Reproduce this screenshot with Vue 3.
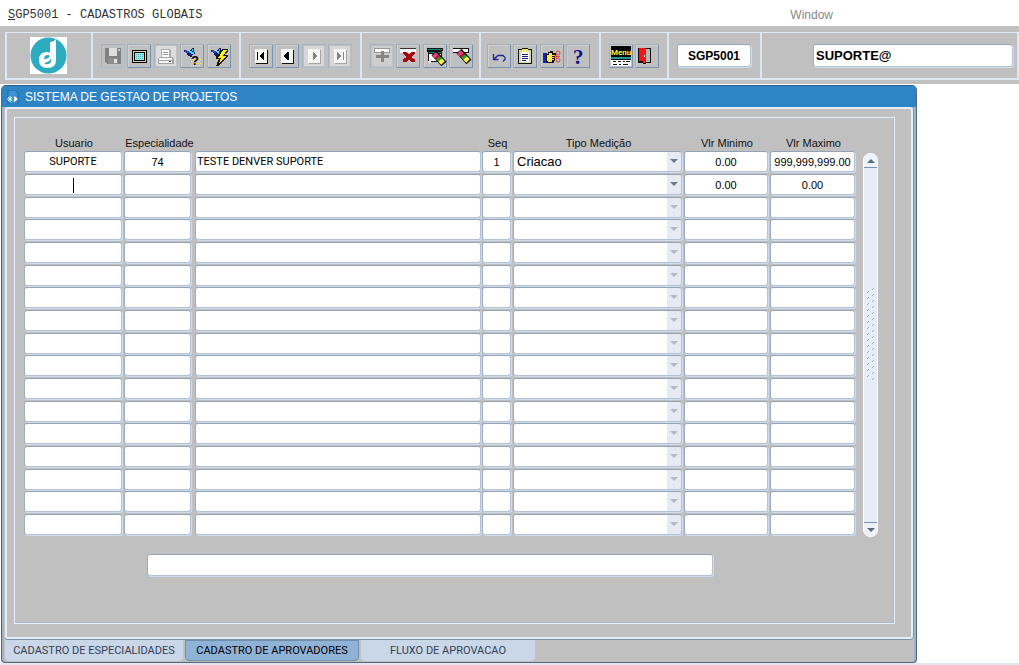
<script setup>
import { ref } from 'vue'

const rows = ref(
  Array.from({ length: 17 }, (_, i) => ({
    user: '', code: '', desc: '', seq: '', kind: '',
    min: i === 1 ? '0.00' : '', max: i === 1 ? '0.00' : '',
    active: i < 2,
  })),
)
Object.assign(rows.value[0], {
  user: 'SUPORTE', code: '74', desc: 'TESTE DENVER SUPORTE', seq: '1',
  kind: 'Criacao', min: '0.00', max: '999,999,999.00',
})

const program = ref('SGP5001')
const login = ref('SUPORTE@')
const message = ref('')
const tabs = ['CADASTRO DE ESPECIALIDADES', 'CADASTRO DE APROVADORES', 'FLUXO DE APROVACAO']
const current = ref(1)

const groups = [
  { name: 'file', tools: ['save', 'screen', 'print', 'query', 'execute'] },
  { name: 'nav', tools: ['first', 'previous', 'next', 'last'] },
  { name: 'record', tools: ['insert', 'remove', 'clear-block', 'clear-record'] },
  { name: 'edit', tools: ['undo', 'clipboard', 'keys', 'help'] },
  { name: 'menu', tools: ['menu', 'exit'] },
]
const disabled = ['save', 'print', 'next', 'last', 'insert']
</script>

<template>
  <div class="app">
    <header class="menubar">
      <span class="caption"><u>S</u>GP5001 - CADASTROS GLOBAIS</span>
      <button class="window-menu" type="button">Window</button>
    </header>

    <div class="toolbar">
      <div class="strip">
        <div class="segment logo">
          <svg width="37" height="37" viewBox="0 0 37 37" aria-label="Denver">
            <rect width="37" height="37" fill="#fff" />
            <circle cx="18.5" cy="18.500" r="18" fill="#2dacc0" />
            <path d="M20 5q4 0 6-3v21q0 8-8.500 8T9 23t8-8q2 0 3 1z" fill="#fff" />
            <path d="M18 18q-4 0-4 4 5 0 6-3-1-1-2-1zM14 26q4 3 7-1v-4q-1 4-7 5z" fill="#2dacc0" />
          </svg>
        </div>

        <div v-for="g in groups" :key="g.name" class="segment" :class="g.name">
          <button v-for="t in g.tools" :key="t" type="button" class="tool" :aria-label="t" :disabled="disabled.includes(t)">
            <svg width="24" height="24" viewBox="0 0 24 24" shape-rendering="crispEdges">
              <g v-if="t === 'save'">
                <path d="M4 4h16v16H6l-2-2z" fill="#808080" />
                <path d="M8 4h8v8H8z" fill="#dedede" /><path d="M17 5h2v2h-2z" fill="#c8c8c8" />
                <path d="M7 14h10v6H7z" fill="#8e8e8e" /><path d="M13 15h3v4h-3z" fill="#e0e0e0" />
              </g>
              <g v-else-if="t === 'screen'">
                <path d="M5 6h15v13H5z" /><path d="M6 7h13v11H6z" fill="#d7d7a0" />
                <path d="M7 8h11v9H7z" /><path d="M8 9h9v7H8z" fill="#9be8e8" />
                <path d="M9 10.500h7M9 12.500h7M9 14.500h7" stroke="#4ab4bd" stroke-dasharray="1 1" />
              </g>
              <g v-else-if="t === 'print'">
                <path d="M2 2h20v20H2z" fill="#dcdcdc" /><path d="M7 5h9v1h1v8H7z" fill="#aaa" />
                <path d="M8 6h7v7H8z" fill="#fff" /><path d="M9 8.500h5M9 10.500h5" stroke="#999" />
                <path d="M5 13h14v1h1v6H4v-6h1z" fill="#a4a4a4" /><path d="M5 14h13v2H5zM5 17h13v2H5z" fill="#f4f4f4" />
                <path d="M15 17h2v1h-2z" fill="#666" />
              </g>
              <g v-else-if="t === 'query' || t === 'execute'">
                <path d="M4 6h3v1h2v1h1V6h1V5h1V4h2v4h1v2h-2v1h-1v2h-2v-1H8v-1H7V9H6V8H4z" fill="#101d70" />
                <path d="M5 6h2v1h2v2H7V8H5z" fill="#2446c7" />
                <path d="M10 7h2v1h2v2h-3V9h-1zM12 5h1v2h-1z" fill="#3adcf0" />
                <g v-if="t === 'query'">
                  <path d="M11 13.500h10M12 15.500h9M11 17.500h10M12 19.500h9M11 21.500h10" stroke="#f3e76d" stroke-dasharray="1 1" />
                  <text x="11" y="21" class="query-mark">?</text>
                </g>
                <g v-else>
                  <path d="M15 5h6v2l-3 4h3v2L11 22H9l3-7H9v-2z" fill="#161600" />
                  <path d="M16 6h4l-4 6h4l-8 7 2-5h-3z" fill="#ffed24" />
                </g>
              </g>
              <g v-else-if="['first', 'previous', 'next', 'last'].includes(t)">
                <path v-if="disabled.includes(t)" d="M2 2h20v20H2z" fill="#d7d7d7" />
                <path d="M7 6h12v14H7z" :fill="disabled.includes(t) ? '#a5a5a5' : '#111'" />
                <path d="M6 5h12v14H6z" fill="#f5f5f3" />
                <g :fill="disabled.includes(t) ? '#858585' : '#000'">
                  <path v-if="t === 'first'" d="M8 8h1v8H8zm7 0v8h-1v-1h-1v-1h-1v-1h-1v-2h1v-1h1V9h1V8z" />
                  <path v-if="t === 'previous'" d="M14 8v8h-2v-1h-1v-1h-1v-1H9v-2h1v-1h1V9h1V8z" />
                  <path v-if="t === 'next'" d="M11 8v8h1v-1h1v-1h1v-1h1v-2h-1v-1h-1V9h-1V8z" />
                  <path v-if="t === 'last'" d="M9 8v8h1v-1h1v-1h1v-1h1v-2h-1v-1h-1V9h-1V8zm6 0h1v8h-1z" />
                </g>
              </g>
              <g v-else-if="t === 'insert'">
                <path d="M2 2h20v20H2z" fill="#cecece" /><path d="M4 4h16v5H4z" fill="#999" /><path d="M5 5h14v3H5z" fill="#fff" />
                <path d="M11 7h3v4h5v3h-5v4h-3v-4H6v-3h5z" fill="#858585" />
              </g>
              <g v-else-if="t === 'remove'">
                <path d="M4 5h16v4H4z" fill="#fff" /><path d="M4 4h16v1H4z" fill="#333" />
                <path d="M7 8h4v1h1v1h2V9h1V8h4v2h-1v1h-1v1h-1v2h1v1h2v3h-4v-1h-1v-1h-2v1h-1v1H7v-3h1v-1h2v-2H9v-1H8v-1H7z" fill="#a80810" />
              </g>
              <g v-else-if="t === 'clear-block' || t === 'clear-record'">
                <g v-if="t === 'clear-block'">
                  <path d="M4 4h16v3h-1v11H5V8H4z" fill="#111" /><path d="M5 5h14v1H5z" fill="#168582" />
                  <path d="M6 8h12v1H6z" fill="#168582" /><path d="M6 10h12v7H6z" fill="#fff" />
                  <path d="M4 18l5-4-1 5z" fill="#e4e4e4" />
                </g>
                <g v-else><path d="M4 4h16v5H4z" fill="#111" /><path d="M4 5h15v3H4z" fill="#fff" /></g>
                <g :transform="t === 'clear-block' ? 'translate(1 2)' : ''" shape-rendering="auto" fill="none">
                  <path d="M10 7l10 11" stroke="#111" stroke-width="7" />
                  <path d="M10 8l3 3" stroke="#ee3b83" stroke-width="5" />
                  <path d="M12.500 10.500l2 2" stroke="#b01830" stroke-width="5" />
                  <path d="M14 12l2 2" stroke="#13a32a" stroke-width="5" />
                  <path d="M16 14l3 3" stroke="#fff23e" stroke-width="5" />
                </g>
              </g>
              <path v-else-if="t === 'undo'" d="M6.500 10v5.500h5M7 15l4-3.500h5l2 2v2l-2 2" fill="none" stroke="#20269b" stroke-width="1.300" shape-rendering="auto" />
              <g v-else-if="t === 'clipboard'">
                <path d="M5 5h4V4h6v1h4v15H5z" fill="#111" /><path d="M6 6h12v13H6z" fill="#d8d8ae" />
                <path d="M8 8h8v10H8z" fill="#fff" /><path d="M9 5h6v3H9z" fill="#f5ed61" />
                <path d="M9 10.500h6M9 12.500h6M9 14.500h6M9 16.500h4" stroke="#172084" />
              </g>
              <g v-else-if="t === 'keys'">
                <path d="M3 9h4v10H3z" fill="#1722b6" />
                <path d="M6 10h2V8h2V7h3v2h3v3h-1v5h-1v2H7v-1H6z" fill="#111" />
                <path d="M7 11h2V9h3v2h3v1h-3v1h2v1h-2v1h2v1h-2v2H8v-1H7z" fill="#ffe45a" />
                <g fill="none" stroke="#e0404a" shape-rendering="auto"><circle cx="18" cy="9" r="2" /><circle cx="18" cy="16" r="2" /><path d="M14 14l3-4M15 11l2 4M16 12.500h4" /></g>
              </g>
              <text v-else-if="t === 'help'" x="7" y="20" class="help-mark">?</text>
              <g v-else-if="t === 'menu'">
                <path d="M2 2h20v11H2z" /><text x="2" y="11" class="menu-text">Menu</text>
                <path d="M2 13h20v2H2z" fill="#2d9297" /><path d="M2 15h20v7H2z" fill="#fff" />
                <path d="M2 15.500h20M4 17.500h3M9 17.500h3M14 17.500h2M17 17.500h4M4 20.500h4M10 20.500h2M14 20.500h5" stroke="#111" />
              </g>
              <g v-else>
                <path d="M3 4h13v15h-5v1H8v-1H3z" fill="#111" /><path d="M11 5h4v13h-4z" fill="#b8b8b8" />
                <path d="M4 4h7v15H8v-2H4z" fill="#f51414" /><path d="M9 11h1v2H9z" fill="#fff" />
              </g>
            </svg>
          </button>
        </div>

        <div class="segment program"><input v-model="program" class="field" aria-label="Programa" /></div>
        <div class="segment login"><input v-model="login" class="field" aria-label="Login" /></div>
      </div>
    </div>

    <main class="window">
      <h1 class="titlebar">
        <svg width="12" height="14" viewBox="0 0 12 14">
          <path d="M1 0h7l3 3v11H1z" fill="#3e94cf" stroke="#1b6baa" />
          <path d="M0 9h5M3 6v6M1 7l4 4M5 7l-4 4" stroke="#d9f1ff" /><path d="M7 6l4 3-4 3z" fill="#fff" />
        </svg>
        SISTEMA DE GESTAO DE PROJETOS
      </h1>

      <section class="panel">
        <div class="frame">
          <div class="records">
            <table>
              <colgroup>
                <col class="c-user" /><col class="c-code" /><col /><col class="c-seq" />
                <col class="c-kind" /><col class="c-min" /><col class="c-max" />
              </colgroup>
              <thead>
                <tr>
                  <th>Usuario</th><th>Especialidade</th><th></th><th>Seq</th>
                  <th>Tipo Medição</th><th>Vlr Minimo</th><th>Vlr Maximo</th>
                </tr>
              </thead>
              <tbody>
                <tr v-for="(r, i) in rows" :key="i">
                  <td class="user"><input v-model="r.user" class="field" aria-label="Usuario" /><span v-if="i === 1" class="caret"></span></td>
                  <td class="code"><input v-model="r.code" class="field" aria-label="Especialidade" /></td>
                  <td class="desc"><input v-model="r.desc" class="field" aria-label="Descrição" /></td>
                  <td><input v-model="r.seq" class="field" aria-label="Seq" /></td>
                  <td class="kind" :class="{ idle: !r.active }">
                    <select v-model="r.kind" class="field" aria-label="Tipo Medição" :disabled="!r.active">
                      <option value=""></option><option>Criacao</option>
                    </select>
                  </td>
                  <td class="min"><input v-model="r.min" class="field" aria-label="Vlr Minimo" /></td>
                  <td><input v-model="r.max" class="field" aria-label="Vlr Maximo" /></td>
                </tr>
              </tbody>
            </table>
            <div class="scroller">
              <button type="button" class="up" aria-label="Subir"></button>
              <div class="grip"></div>
              <button type="button" class="down" aria-label="Descer"></button>
            </div>
          </div>
          <input v-model="message" class="field message" aria-label="Mensagem" />
        </div>
      </section>

      <nav class="tabs">
        <button v-for="(t, i) in tabs" :key="t" type="button" :class="{ on: i === current }" @click="current = i">{{ t }}</button>
      </nav>
    </main>
    <footer class="status"></footer>
  </div>
</template>

<style>
body { background: #fff; }
</style>

<style scoped>
* { box-sizing: border-box; }
.app { font-family: "Liberation Sans", Arial, sans-serif; font-size: 11px; color: #111; }
button, input, select { font: inherit; color: inherit; }

.menubar { display: flex; align-items: center; height: 26px; padding: 3px 186px 0 8px; justify-content: space-between; }
.caption { font: 12px "Liberation Mono", monospace; color: #333; }
.window-menu { border: 0; padding: 0; background: none; font-size: 12px; color: #888; }

.toolbar { padding: 6px 0 4px 5px; background: #c0c0c0; }
.strip { display: flex; height: 48px; border: 1px solid #dfe9f5; border-width: 1px 2px 2px 2px; }
.segment { display: flex; align-items: center; padding: 0 0 0 8px; border-right: 2px solid #dce6f2; flex: none; }
.logo { width: 86px; padding-left: 23px; }
.file { width: 148px; }
.nav { width: 121px; }
.record { width: 119px; }
.edit { width: 120px; padding-left: 6px; }
.menu { width: 68px; }
.program { width: 93px; padding: 0 9px 0 8px; }
.login { flex: 1; padding: 0 4px 0 51px; border-right: 0; }
.tool { width: 24px; height: 24px; padding: 0; border: 0; background: #c0c0c0; flex: none;
  box-shadow: inset 1px 1px #a7aeb5, inset -1px -1px #7993b0, inset 2px 2px #cbd0d5; }
.tool:nth-child(even) { margin-left: 2px; }
.tool:nth-child(odd) { margin-left: 3px; }
.tool:first-child { margin-left: 0; }
.tool:disabled { box-shadow: inset 1px 1px #a8b2bd, inset -1px -1px #b0bdcc; }
.tool svg { display: block; }
.query-mark { font: bold 13px "Liberation Sans", sans-serif; }
.help-mark { font: bold 21px "Liberation Serif", serif; fill: #11118a; }
.menu-text { font: bold 8px Roboto, sans-serif; fill: #ffef30; }

.field { display: block; width: 100%; height: 21px; margin: 0; padding: 0 1px; background: #fff; outline: 0;
  border: 1px solid #b3c2d5; border-top-color: #94a3b5; border-left-color: #9eacbd; border-radius: 3px;
  box-shadow: 1px 1px #d0dcec; text-align: center; color: #000; }
.program .field { height: 23px; font-weight: bold; font-size: 12px; }
.login .field { height: 23px; padding: 0 2px; font-weight: bold; font-size: 13px; text-align: left; }

.window { margin: 1px 102px 0 1px; padding: 0 3px 1px; background: #c0c0c0; border: 1px solid #51677c;
  border-top-color: #285d88; border-radius: 5px 5px 4px 4px; box-shadow: inset 2px 0 #9fb3c9, inset -2px 0 #9fb3c9; }
.titlebar { display: flex; align-items: center; gap: 6px; height: 21px; margin: 0 -3px; padding: 0 5px;
  background: #2e84c5; border-radius: 4px 4px 0 0; color: #fff; font-size: 12px; font-weight: normal; }
.panel { padding: 8px 16px 13px 7px; border: 2px solid #e4eef9; border-radius: 3px; box-shadow: 0 1px #7890a8, 1px 0 #8195aa; }
.frame { padding: 16px 16px 47px 9px; border: 1px solid #e4edf8; box-shadow: inset -1px -1px #adbccd; }
.records { display: flex; gap: 6px; align-items: flex-end; }

table { flex: 1; width: 100%; min-width: 0; border-collapse: collapse; table-layout: fixed; }
.c-user { width: 100px; }
.c-code { width: 71px; }
.c-seq { width: 31px; }
.c-kind { width: 171px; }
.c-min { width: 86px; }
.c-max { width: 87px; }
th { height: 17px; padding: 0; font-weight: normal; white-space: nowrap; text-align: center; vertical-align: middle; }
td { position: relative; height: 23px; padding: 0 2px 0 0; vertical-align: top; }
tr:nth-child(3n) td { height: 22px; }
td.code { padding-right: 4px; }
td.desc { padding-right: 1px; }
.user .field, .desc .field { font-family: Roboto, sans-serif; }
.desc .field { text-align: left; }
.kind .field { appearance: none; padding: 0 3px; font-size: 13px; text-align: left; opacity: 1;
  background: linear-gradient(#e6ebf3, #e6ebf3) right / 14px 100% no-repeat #fff; }
.kind::after { content: ""; position: absolute; right: 6px; top: 8px; border: 4px solid transparent;
  border-top-color: #68788b; border-bottom: 0; pointer-events: none; }
.kind.idle::after { border-top-color: #b4bac2; }
.caret { position: absolute; left: 49px; top: 4px; width: 1px; height: 15px; background: #000; }

.scroller { display: flex; flex-direction: column; justify-content: space-between; align-items: stretch;
  width: 15px; height: 384px; background: #e7edf5; border: 1px solid #fafcff; border-radius: 7px; flex: none; }
.scroller button { position: relative; height: 14px; padding: 0; border: 0; background: #edf1f8; }
.scroller .up { border-bottom: 1px solid #7990a8; border-radius: 6px 6px 0 0; }
.scroller .down { border-top: 1px solid #7990a8; border-radius: 0 0 6px 6px; }
.scroller button::after { content: ""; position: absolute; left: 3px; top: 5px; border: 4px solid transparent; }
.scroller .up::after { border-top: 0; border-bottom-color: #596b80; }
.scroller .down::after { border-bottom: 0; border-top-color: #596b80; }
.grip { height: 92px; margin: 0 2px 22px; background:
  linear-gradient(135deg, transparent 1px, #9aabbf 1px, #9aabbf 2px, transparent 2px) 1px 3px / 5px 6px repeat-y,
  linear-gradient(135deg, transparent 1px, #9aabbf 1px, #9aabbf 2px, transparent 2px) 6px 0 / 5px 6px repeat-y; }
.message { width: calc(100% - 288px); height: 22px; margin: 17px 0 0 123px; }

.tabs { display: flex; gap: 2px; margin-top: 1px; }
.tabs button { width: 174px; height: 21px; padding: 0; border: 1px solid #c9d6e6; border-radius: 0 0 4px 4px;
  background: #c9d7e9; color: #354052; font-family: Roboto, sans-serif; white-space: nowrap; }
.tabs button:first-child { width: 178px; }
.tabs button.on { background: #8fb3d7; border-color: #718eaa; color: #000; }
.status { height: 2px; background: #e2e8f0; }
</style>
